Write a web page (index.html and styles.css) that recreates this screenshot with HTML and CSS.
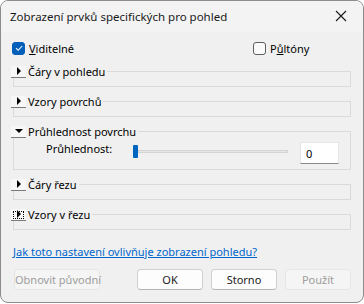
FILE: index.html
```html
<!DOCTYPE html>
<html lang="cs">
<head>
    <meta charset="UTF-8">
    <title>Zobrazení prvků specifických pro pohled</title>
    <link rel="stylesheet" href="styles.css">
</head>
<body>
    <div class="dialog">
        <div class="titlebar">
            <span class="title">Zobrazení prvků specifických pro pohled</span>
            <svg class="close" width="12" height="12" viewBox="0 0 12 12">
                <path d="M1 1 L11 11 M11 1 L1 11" stroke="#1a1a1a" stroke-width="1.1" fill="none"/>
            </svg>
        </div>
        <div class="content">
            <div class="checks">
                <label class="check visible">
                    <span class="box checked">
                        <svg width="10" height="10" viewBox="0 0 10 10">
                            <path d="M2 5.2 L4.2 7.3 L8.2 3" stroke="#fff" stroke-width="1.1" fill="none"/>
                        </svg>
                    </span>
                    <span><u>V</u>iditelné</span>
                </label>
                <label class="check">
                    <span class="box"></span>
                    <span>P<u>ů</u>ltóny</span>
                </label>
            </div>

            <fieldset class="group">
                <legend><span class="toggle"><span class="tri right"></span></span>Čáry v pohledu</legend>
            </fieldset>

            <fieldset class="group">
                <legend><span class="toggle"><span class="tri right"></span></span>Vzory povrchů</legend>
            </fieldset>

            <fieldset class="group open">
                <legend><span class="toggle"><span class="tri down"></span></span>Průhlednost povrchu</legend>
                <div class="slider-row">
                    <span class="slider-label">Průhlednost:</span>
                    <div class="slider">
                        <span class="thumb"></span>
                        <span class="track"></span>
                    </div>
                    <div class="num">0</div>
                </div>
            </fieldset>

            <fieldset class="group">
                <legend><span class="toggle"><span class="tri right"></span></span>Čáry řezu</legend>
            </fieldset>

            <fieldset class="group">
                <legend><span class="toggle focus"><span class="tri right"></span></span>Vzory v řezu</legend>
            </fieldset>

            <a class="help" href="#">Jak toto nastavení ovlivňuje zobrazení pohledu?</a>

            <div class="buttons">
                <button class="btn disabled reset">Obnovit původní</button>
                <div class="spacer"></div>
                <button class="btn">OK</button>
                <button class="btn">Storno</button>
                <button class="btn disabled">Použít</button>
            </div>
        </div>
    </div>
</body>
</html>
```
FILE: styles.css
```css
/* Reset default styles */
* {
    margin: 0;
    padding: 0;
    box-sizing: border-box;
}
body {
    font-family: "Segoe UI", "Noto Sans", sans-serif;
    font-size: 11px;
    color: #000;
    background-color: #fff;
    width: 364px;
    height: 304px;
    overflow: hidden;
}
.dialog {
    width: 364px;
    height: 303px;
    border: 1px solid #8c8c8c;
    border-radius: 8px;
    background-color: #f0f0f0;
    overflow: hidden;
    display: flex;
    flex-direction: column;
}
.titlebar {
    height: 31px;
    background-color: #f3f3f3;
    display: flex;
    align-items: center;
    padding: 0 0 1px 9px;
}
.title {
    flex: 1;
    font-size: 11.5px;
    color: #1a1a1a;
}
.close {
    margin-right: 16px;
}
.content {
    flex: 1;
    padding: 9px 12px 0 11px;
    display: flex;
    flex-direction: column;
}
.checks {
    display: flex;
    align-items: center;
    height: 14px;
    margin-bottom: 10px;
}
.check {
    display: flex;
    align-items: center;
    gap: 4px;
}
.check.visible {
    flex: 0 0 241px;
}
.box {
    width: 13px;
    height: 13px;
    border: 1px solid #5f5f5f;
    border-radius: 3px;
    background-color: #fafafa;
    display: flex;
    align-items: center;
    justify-content: center;
}
.box.checked {
    background-color: #005fb8;
    border-color: #005fb8;
}
/* collapsible group boxes */
.group {
    border: 1px solid #dadada;
    margin: 0 0 8px 1px;
    height: 22px;
}
.group.open {
    height: 45px;
}
.group legend {
    display: flex;
    align-items: center;
    margin-left: -3px;
    padding-right: 2px;
    height: 13px;
}
.toggle {
    width: 15px;
    height: 12px;
    background-color: #f7f7f7;
    border-bottom: 1px solid #7a7a7a;
    margin-right: 2px;
    display: flex;
    align-items: center;
    justify-content: center;
}
.toggle.focus {
    outline: 1px dotted #000;
    outline-offset: -3px;
}
.tri {
    width: 0;
    height: 0;
}
.tri.right {
    border-top: 4px solid transparent;
    border-bottom: 4px solid transparent;
    border-left: 4px solid #000;
}
.tri.down {
    border-left: 4px solid transparent;
    border-right: 4px solid transparent;
    border-top: 4px solid #000;
}
.slider-row {
    display: flex;
    align-items: flex-start;
    padding: 4px 11px 0 32px;
}
.slider-label {
    width: 87px;
    margin-top: -1px;
}
.slider {
    display: flex;
    align-items: center;
    width: 155px;
    margin-top: 3px;
}
.thumb {
    width: 5px;
    height: 13px;
    background-color: #0067c0;
    border-radius: 1px;
}
.track {
    flex: 1;
    height: 3px;
    background-color: #e6e6e6;
    border: 1px solid #d4d4d4;
}
.num {
    margin-left: auto;
    width: 39px;
    height: 22px;
    background-color: #fff;
    border: 1px solid #e5e5e5;
    border-bottom: 1px solid #8a8a8a;
    padding: 3px 0 0 5px;
}
.help {
    color: #0066cc;
    margin: 6px 0 0 1px;
}
.buttons {
    display: flex;
    margin-top: 10px;
    gap: 8px;
    padding-left: 2px;
}
.spacer {
    flex: 1;
}
.btn {
    font: inherit;
    white-space: nowrap;
    width: 66px;
    height: 21px;
    background-color: #fdfdfd;
    border: 1px solid #d0d0d0;
    border-bottom-color: #b5b5b5;
    border-radius: 4px;
    color: #1a1a1a;
}
.btn.reset {
    width: 86px;
}
.btn.disabled {
    background-color: #f5f5f5;
    border-color: #e6e6e6;
    color: #9d9d9d;
}
```
